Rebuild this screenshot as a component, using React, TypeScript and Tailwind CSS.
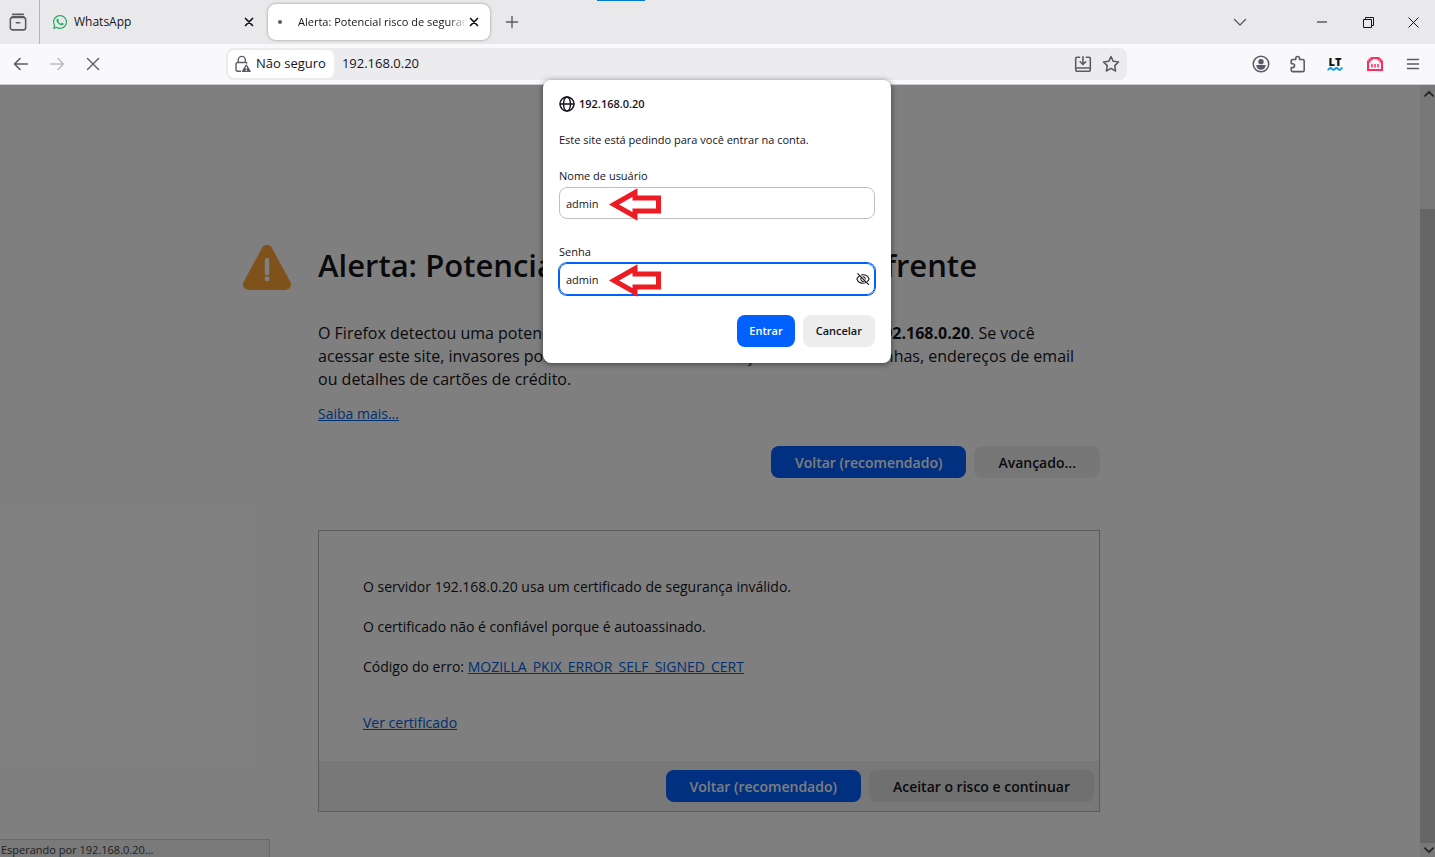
import { useState } from "react";
import type { ReactNode } from "react";
import { FaWhatsapp } from "react-icons/fa";

const HOST = "192.168.0.20";

interface IconButtonProps {
  label: string;
  className?: string;
  children: ReactNode;
}

function IconButton({ label, className = "w-9", children }: IconButtonProps) {
  return (
    <button aria-label={label} className={`flex h-8 shrink-0 items-center justify-center text-[#5b5b66] ${className}`}>
      {children}
    </button>
  );
}

interface IconProps {
  size?: number;
  width?: number;
  children: ReactNode;
}

// 16px line icons of the toolbar
function Icon({ size = 16, width = 1.4, children }: IconProps) {
  return (
    <svg
      width={size}
      height={size}
      viewBox="0 0 16 16"
      fill="none"
      stroke="currentColor"
      strokeWidth={width}
      strokeLinecap="round"
      strokeLinejoin="round"
      aria-hidden="true"
    >
      {children}
    </svg>
  );
}

function CloseTab() {
  return (
    <button aria-label="Fechar aba" className="flex h-6 w-6 shrink-0 items-center justify-center text-[#15141a]">
      <Icon width={1.7}>
        <path d="M4.5 4.5l7 7M11.5 4.5l-7 7" />
      </Icon>
    </button>
  );
}

function TabBar() {
  return (
    <header className="relative flex h-11 shrink-0 items-center bg-[#e9e9eb] text-[#15141a]">
      <div className="absolute top-0 left-[597px] h-px w-12 bg-[#0078d7]" />
      <div className="flex h-full w-10 shrink-0 items-center justify-center border-r border-[#b4b4b9] pr-1">
        <IconButton label="Firefox View" className="w-8">
          <Icon size={18}>
            <path d="M3.2 1.2h9.6" />
            <rect x="1.2" y="4" width="13.6" height="11" rx="2" />
            <path d="M2.2 4.2l.6-.8h10.4l.6.8M6.5 8.6h3" />
          </Icon>
        </IconButton>
      </div>

      <div className="flex h-9 w-[224px] items-center pr-[3px] pl-3">
        <FaWhatsapp className="h-4 w-4 shrink-0 text-[#1fab5b]" />
        <span className="ml-1.5 flex-1 truncate text-[12px]">WhatsApp</span>
        <CloseTab />
      </div>

      <div className="ml-1 flex h-9 w-[222px] items-center rounded-lg bg-white pr-1 pl-2 shadow-[0_0_3px_rgba(0,0,0,0.4)]">
        <span className="mr-4 ml-0.5 h-1 w-1 shrink-0 rounded-full bg-[#5b5b66]" />
        <span className="-mr-1.5 min-w-0 flex-1 overflow-hidden text-[11px] whitespace-nowrap [mask-image:linear-gradient(to_left,transparent,black_20px)]">
          Alerta: Potencial risco de segurança
        </span>
        <CloseTab />
      </div>

      <IconButton label="Nova aba" className="ml-1 w-9">
        <Icon>
          <path d="M8 2.5v11M2.5 8h11" />
        </Icon>
      </IconButton>

      <div className="ml-auto flex items-center">
        <IconButton label="Listar abas" className="mr-[51px]">
          <Icon>
            <path d="M2.5 5.5L8 11l5.5-5.5" />
          </Icon>
        </IconButton>
        <button aria-label="Minimizar" className="flex h-8 w-[46px] items-center justify-center">
          <Icon size={10} width={1.6}>
            <path d="M0 8h16" />
          </Icon>
        </button>
        <button aria-label="Restaurar" className="flex h-8 w-[46px] items-center justify-center">
          <svg width="11" height="11" viewBox="0 0 11 11" fill="none" stroke="currentColor" aria-hidden="true">
            <path d="M.5 2.5h8v8h-8zM2.5 2.5v-2h8v8h-2" />
          </svg>
        </button>
        <button aria-label="Fechar" className="flex h-8 w-[44px] items-center justify-center">
          <svg width="11" height="11" viewBox="0 0 11 11" stroke="currentColor" aria-hidden="true">
            <path d="M.5.5l10 10M10.5.5l-10 10" />
          </svg>
        </button>
      </div>
    </header>
  );
}

function Toolbar() {
  return (
    <nav className="flex h-[41px] shrink-0 items-center border-b border-[#ccccd0] bg-[#f9f9fb] px-[3px]">
      <IconButton label="Voltar">
        <Icon width={1.6}>
          <path d="M14.5 8h-13M7 2.5L1.5 8 7 13.5" />
        </Icon>
      </IconButton>
      <IconButton label="Avançar">
        <span className="text-[#bcbcc2]">
          <Icon width={1.6}>
            <path d="M1.5 8h13M9 2.5L14.5 8 9 13.5" />
          </Icon>
        </span>
      </IconButton>
      <IconButton label="Parar">
        <Icon>
          <path d="M2.5 2.5l11 11M13.5 2.5l-11 11" />
        </Icon>
      </IconButton>

      <div className="mx-[115px] flex h-8 flex-1 items-center rounded-lg bg-[#ececee] pr-0.5 pl-0.5 text-[#15141a]">
        <button className="flex h-7 shrink-0 items-center gap-0.5 rounded-md bg-white px-2 pl-1.5 text-[13px]">
          <svg width="20" height="18" viewBox="0 0 20 18" fill="none" stroke="#5b5b66" strokeWidth="1.4" aria-hidden="true">
            <path d="M4.2 7.5V5a3.6 3.6 0 0 1 7.2 0v2.5M7 16.3H4a2 2 0 0 1-2-2V9.5a2 2 0 0 1 2-2h7.6a2 2 0 0 1 1.6.8" />
            <path d="M12.3 10l3.8 6.3H8.5z" fill="#5b5b66" strokeLinejoin="round" />
            <path d="M12.3 11.4v2.6M12.3 14.8v1.2" stroke="#fff" strokeWidth="1.2" />
          </svg>
          Não seguro
        </button>
        <input
          aria-label="Endereço"
          defaultValue={HOST}
          className="ml-2 min-w-0 flex-1 bg-transparent text-[13px] outline-none"
        />
        <IconButton label="Instalar" className="w-7">
          <Icon size={18}>
            <path d="M5 2H2.8A1.3 1.3 0 0 0 1.5 3.3v9.9A1.3 1.3 0 0 0 2.8 14.5h10.4a1.3 1.3 0 0 0 1.3-1.3V3.3A1.3 1.3 0 0 0 13.2 2H11M1.5 11.5h13M8 1.5v6.5M5.5 6L8 8.5 10.5 6" />
          </Icon>
        </IconButton>
        <IconButton label="Favoritar" className="w-7">
          <Icon size={18}>
            <path d="M8 1.3l2 4.3 4.7.6-3.4 3.3.8 4.7L8 11.9l-4.1 2.3.8-4.7L1.3 6.2 6 5.6z" />
          </Icon>
        </IconButton>
      </div>

      <IconButton label="Conta" className="w-[38px]">
        <Icon size={18}>
          <circle cx="8" cy="8" r="6.9" />
          <circle cx="8" cy="5.9" r="1.7" fill="currentColor" />
          <path d="M4.5 9.6h7a3.6 3.6 0 0 1-7 0z" fill="currentColor" />
        </Icon>
      </IconButton>
      <IconButton label="Extensões" className="w-[38px] pr-0.5">
        <Icon size={18}>
          <path d="M2 6.2V5.3a1.3 1.3 0 0 1 1.3-1.3H6V3a1.7 1.7 0 0 1 3.4 0v1h2.8A1.3 1.3 0 0 1 13.5 5.3v8.2a1.3 1.3 0 0 1-1.3 1.3H3.3A1.3 1.3 0 0 1 2 13.5v-2.3h1.2a1.7 1.7 0 0 0 0-3.4H2z" />
        </Icon>
      </IconButton>
      <IconButton label="LanguageTool" className="w-[38px] pr-1">
        <svg width="18" height="18" viewBox="0 0 18 18" aria-hidden="true">
          <text x="9" y="10.5" textAnchor="middle" fontFamily="Open Sans" fontSize="11" fontWeight="800" fill="#111">
            LT
          </text>
          <path
            d="M1.5 14.7c1.5 0 1.5-1.8 3-1.8s1.5 1.8 3 1.8 1.5-1.8 3-1.8 1.5 1.8 3 1.8 1.5-1.8 3-1.8"
            fill="none"
            stroke="#189ad6"
            strokeWidth="2"
          />
        </svg>
      </IconButton>
      <IconButton label="Monitor de rede" className="w-[38px]">
        <svg width="16" height="16" viewBox="0 0 16 16" fill="none" stroke="#ff2d5f" strokeWidth="2" aria-hidden="true">
          <path d="M1 14V5.5h1.5v-2h2V2h7v1.500h2v2H15V14z" />
          <path d="M5 11.5V8M8 11.5V8M11 11.5V8" strokeWidth="1.5" />
        </svg>
      </IconButton>
      <IconButton label="Menu" className="w-[38px]">
        <Icon>
          <path d="M2.5 3.5h11M2.5 8h11M2.5 12.5h11" />
        </Icon>
      </IconButton>
    </nav>
  );
}

interface PageButtonProps {
  primary?: boolean;
  children: ReactNode;
}

function PageButton({ primary, children }: PageButtonProps) {
  return (
    <button
      className={`h-8 rounded-lg px-6 text-[14px] font-semibold ${
        primary ? "bg-[#0061fe] text-[#fbfbfe]" : "bg-[#15141a]/7 text-[#15141a]"
      }`}
    >
      {children}
    </button>
  );
}

function CertificatePanel() {
  return (
    <section className="mt-[52px] border border-[#b8b8bf] text-[14px]">
      <div className="flex flex-col items-start gap-5 px-11 pt-[46px] pb-7 leading-5">
        <p>O servidor {HOST} usa um certificado de segurança inválido.</p>
        <p>O certificado não é confiável porque é autoassinado.</p>
        <p>
          Código do erro:{" "}
          <a href="#erro" className="text-[#0060df] underline">
            MOZILLA_PKIX_ERROR_SELF_SIGNED_CERT
          </a>
        </p>
        <a href="#certificado" className="mt-4 text-[#0060df] underline">
          Ver certificado
        </a>
      </div>
      <div className="flex justify-end gap-2 bg-[#f0f0f0] px-[5px] py-[9px]">
        <PageButton primary>Voltar (recomendado)</PageButton>
        <PageButton>Aceitar o risco e continuar</PageButton>
      </div>
    </section>
  );
}

function WarningPage() {
  return (
    <div className="min-w-0 flex-1 pr-0.5 text-[#15141a]">
      <div className="mx-auto max-w-[782px] pt-[158px] pb-11">
        <div className="-ml-[76px] flex items-end gap-[26px]">
          <svg width="50" height="48" viewBox="0 0 50 48" className="shrink-0" aria-hidden="true">
            <path d="M20.3 4.5a5.5 5.5 0 0 1 9.4 0l18.600 34.300a5.500 5.500 0 0 1-4.900 8.200H6.600a5.500 5.500 0 0 1-4.900-8.200z" fill="#ffa436" />
            <path d="M25 17v13" stroke="#fff" strokeWidth="4.5" strokeLinecap="round" />
            <rect x="22.7" y="33.5" width="4.6" height="4.5" rx="1" fill="#fff" />
          </svg>
          <h1 className="h-12 text-[31px] leading-[44px] font-semibold whitespace-nowrap">
            Alerta: Potencial risco de segurança à frente
          </h1>
        </div>
        <p className="mt-[31px] pr-4 text-[16px] leading-[23px]">
          O Firefox detectou uma potencial ameaça de segurança e não seguiu para <b>{HOST}</b>. Se você acessar este
          site, invasores podem tentar roubar informações como suas senhas, endereços de email ou detalhes de cartões de
          crédito.
        </p>
        <a href="#saiba-mais" className="mt-3 inline-block text-[14px] leading-[22px] text-[#0060df] underline">
          Saiba mais...
        </a>
        <div className="mt-[21px] flex justify-end gap-2">
          <PageButton primary>Voltar (recomendado)</PageButton>
          <PageButton>Avançado...</PageButton>
        </div>
        <CertificatePanel />
      </div>
    </div>
  );
}

function Scrollbar() {
  return (
    <div className="flex w-[15px] shrink-0 flex-col bg-[#f0f0f0] text-[#505050]" aria-hidden="true">
      <div className="flex h-[17px] items-center justify-center pl-0.5">
        <Icon size={10} width={3}>
          <path d="M1.5 11L8 4.5l6.5 6.5" />
        </Icon>
      </div>
      <div className="flex-[107]" />
      <div className="flex-[634] bg-[#cdcdcd]" />
      <div className="flex h-[14px] items-center justify-center pl-0.5">
        <Icon size={10} width={3}>
          <path d="M1.5 5L8 11.5 14.5 5" />
        </Icon>
      </div>
    </div>
  );
}

// Hand-drawn marker that points at a field's value
function RedArrow() {
  return (
    <svg
      width="54"
      height="34"
      viewBox="0 0 54 34"
      className="pointer-events-none absolute top-0 left-[49px]"
      fill="none"
      stroke="#ed1c24"
      strokeWidth="5"
      aria-hidden="true"
    >
      <path d="M6 17.5L27 5.5V11h23.5v13H27v5.5z" />
    </svg>
  );
}

function LoginDialog() {
  const [user, setUser] = useState("admin");
  const [password, setPassword] = useState("admin");

  return (
    <form
      role="dialog"
      aria-label={HOST}
      onSubmit={(e) => e.preventDefault()}
      className="absolute top-20 right-px left-0 mx-auto w-[348px] rounded-lg bg-white p-4 text-[11px] leading-4 text-[#15141a] shadow-[0_1px_6px_rgba(0,0,0,0.5)]"
    >
      <div className="flex items-center gap-1 font-semibold">
        <Icon>
          <circle cx="8" cy="8" r="7" />
          <ellipse cx="8" cy="8" rx="3.5" ry="7" />
          <path d="M1 8h14" />
        </Icon>
        {HOST}
      </div>
      <p className="mt-5">Este site está pedindo para você entrar na conta.</p>

      <label htmlFor="user" className="mt-5 block">
        Nome de usuário
      </label>
      <div className="relative mt-[3px]">
        <input
          id="user"
          value={user}
          onChange={(e) => setUser(e.target.value)}
          className="block h-8 w-full rounded-lg border border-[#bfbfc9] px-1.5 outline-none"
        />
        <RedArrow />
      </div>

      <label htmlFor="password" className="mt-[25px] block">
        Senha
      </label>
      <div className="relative mt-[3px]">
        <input
          id="password"
          value={password}
          onChange={(e) => setPassword(e.target.value)}
          className="block h-8 w-full rounded-lg border border-[#0061fe] px-1.5 ring-1 ring-[#0061fe] outline-none"
        />
        <RedArrow />
        <button type="button" aria-label="Ocultar senha" className="absolute top-0 right-0 flex h-8 w-6 items-center justify-center">
          <Icon size={14} width={1.2}>
            <path d="M4 4.5C2.500 5.400 1.500 6.700 1 8c1 2.700 3.800 4.800 7 4.800 1.100 0 2.200-.2 3.100-.7M6.200 3.400C6.800 3.300 7.400 3.200 8 3.200c3.200 0 6 2.100 7 4.800-.4 1-1.100 2-2 2.700M6 6.500a2.600 2.600 0 0 0 3.700 3.600M8 5.400a2.600 2.600 0 0 1 2.600 2.600M2 1.800l12.500 12.500" />
          </Icon>
        </button>
      </div>

      <div className="mt-5 flex justify-end gap-2 font-semibold">
        <button type="submit" className="h-8 rounded-lg bg-[#0061fe] px-3 text-white">
          Entrar
        </button>
        <button type="button" className="h-8 rounded-lg bg-[#ededed] px-[13px]">
          Cancelar
        </button>
      </div>
    </form>
  );
}

export default function App() {
  return (
    <div className="relative flex min-h-screen flex-col font-['Open_Sans',sans-serif]">
      <TabBar />
      <Toolbar />
      <main className="relative flex flex-1 bg-white">
        <WarningPage />
        <Scrollbar />
        <div className="absolute bottom-0 left-0 h-[18px] w-[270px] border-t border-r border-[#d0d0d0] bg-[#f3f3f3] px-px pt-0.5 text-[11px] leading-4 text-[#444]">
          Esperando por {HOST}...
        </div>
        <div className="absolute inset-0 bg-black/50" />
      </main>
      <LoginDialog />
    </div>
  );
}
